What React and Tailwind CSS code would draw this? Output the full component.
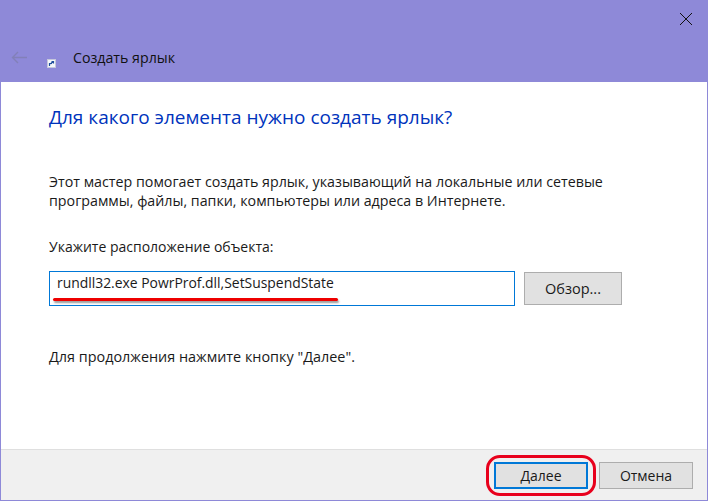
const font = "font-['Open_Sans','Liberation_Sans',sans-serif]"

export default function App() {
  return (
    <div className={`w-[708px] h-[501px] flex flex-col bg-[#8e89d8] pl-px pr-px pb-px overflow-hidden text-[#1a1a1a] ${font}`}>
      {/* Title bar */}
      <div className="h-[82px] -mx-px flex shrink-0 relative">
        <div className="flex items-end pl-[11px] pb-[12px] gap-[19px]">
          <svg width="17" height="13" viewBox="0 0 17 13" fill="none" stroke="#8280b8" strokeWidth="1.4" className="mb-[6px]">
            <path d="M16 6.5H1.5M7 1 1.5 6.5 7 12" />
          </svg>
          <svg width="9" height="9" viewBox="0 0 9 9" className="mb-[2px]">
            <rect x="0.5" y="0.5" width="8" height="8" fill="#f4f6fa" stroke="#c6c8dc" />
            <path d="M2.5 7V4.5H5M3.5 5 6 2.5M4.5 2.5H6.5V4.5" fill="none" stroke="#1f4f9c" strokeWidth="1.2" />
          </svg>
        </div>
        <span className="ml-[17px] mt-[47px] text-[14.2px] leading-[22px] text-[#111]">Создать ярлык</span>
        <button className="absolute right-[16px] top-[13px]">
          <svg width="12" height="12" viewBox="0 0 12 12" stroke="#111" strokeWidth="1" shapeRendering="crispEdges" className="block">
            <path d="M0 0 12 12M12 0 0 12" />
          </svg>
        </button>
      </div>

      {/* Content */}
      <div className="flex-1 bg-white flex flex-col pl-[48px] pr-[85px]">
        <h1 className="mt-[21px] text-[#0033bc] text-[19px] leading-[28px] font-normal">Для какого элемента нужно создать ярлык?</h1>
        <p className="mt-[41px] text-[14.25px] leading-[19px] whitespace-nowrap">
          Этот мастер помогает создать ярлык, указывающий на локальные или сетевые<br />программы, файлы, папки, компьютеры или адреса в Интернете.
        </p>
        <label className="mt-[27px] text-[14px] leading-[20px]">Укажите расположение объекта:</label>
        <div className="mt-[14px] flex items-center gap-[9px]">
          <div className="relative w-[466px] h-[35px] border border-[#0078d7] flex items-center pl-[7px] pb-[10px] text-[13.9px]">
            rundll32.exe PowrProf.dll,SetSuspendState
            <div className="absolute left-[3px] top-[26px] w-[285px] h-[3px] rounded-full bg-[#ee0000] shadow-[1px_2px_2px_rgba(0,0,0,0.4)]" />
          </div>
          <button className="w-[98px] h-[33px] bg-[#e1e1e1] border border-[#adadad] text-[14.5px]">Обзор...</button>
        </div>
        <p className="mt-[41px] text-[14.4px] leading-[20px]">Для продолжения нажмите кнопку "Далее".</p>
      </div>

      {/* Footer */}
      <div className="h-[51px] shrink-0 bg-[#f0f0f0] border-t border-[#dfdfdf] flex items-center justify-end gap-[11px] pr-[14px]">
        <button className="relative w-[94px] h-[27px] bg-[#e1e1e1] border-2 border-[#0078d7] text-[14px]">
          Далее
          <span className="absolute -left-[10px] -right-[10px] -top-[9px] -bottom-[9px] rounded-[14px] border-[3px] border-[#e8001c]" />
        </button>
        <button className="w-[94px] h-[27px] bg-[#e1e1e1] border border-[#adadad] text-[14px]">Отмена</button>
      </div>
    </div>
  )
}
